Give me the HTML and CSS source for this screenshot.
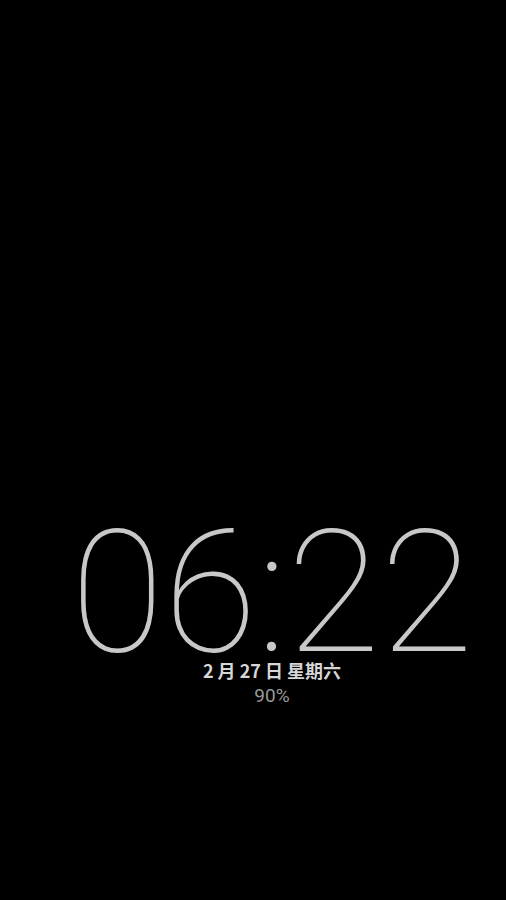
FILE: index.html
```html
<!DOCTYPE html>
<html lang="zh">
<head>
<meta charset="utf-8">
<link rel="stylesheet" href="styles.css">
</head>
<body>
<main class="screen">
  <div class="clock">
    <div class="time">06:22</div>
    <div class="date">2 月 27 日 星期六</div>
    <div class="battery">90%</div>
  </div>
</main>
</body>
</html>
```
FILE: styles.css
```css
html, body {
  margin: 0;
  padding: 0;
  background: #000;
}
.screen {
  width: 506px;
  height: 900px;
  background: #000;
  display: flex;
  flex-direction: column;
  align-items: center;
  padding-top: 528px;
  box-sizing: border-box;
}
.clock {
  display: flex;
  flex-direction: column;
  align-items: center;
  margin-left: 38px;
}
.time {
  font-family: Roboto, sans-serif;
  font-weight: 100;
  font-size: 170px;
  line-height: 130px;
  color: #c8c8c8;
  letter-spacing: 0;
}
.date {
  font-family: "Noto Sans CJK SC", "Noto Sans", sans-serif;
  font-weight: 700;
  font-size: 18px;
  line-height: 22px;
  color: #d6d6d6;
  margin-top: 1px;
}
.battery {
  font-family: Roboto, sans-serif;
  font-weight: 400;
  font-size: 19px;
  line-height: 22px;
  color: #999;
  margin-top: 4px;
}
```
